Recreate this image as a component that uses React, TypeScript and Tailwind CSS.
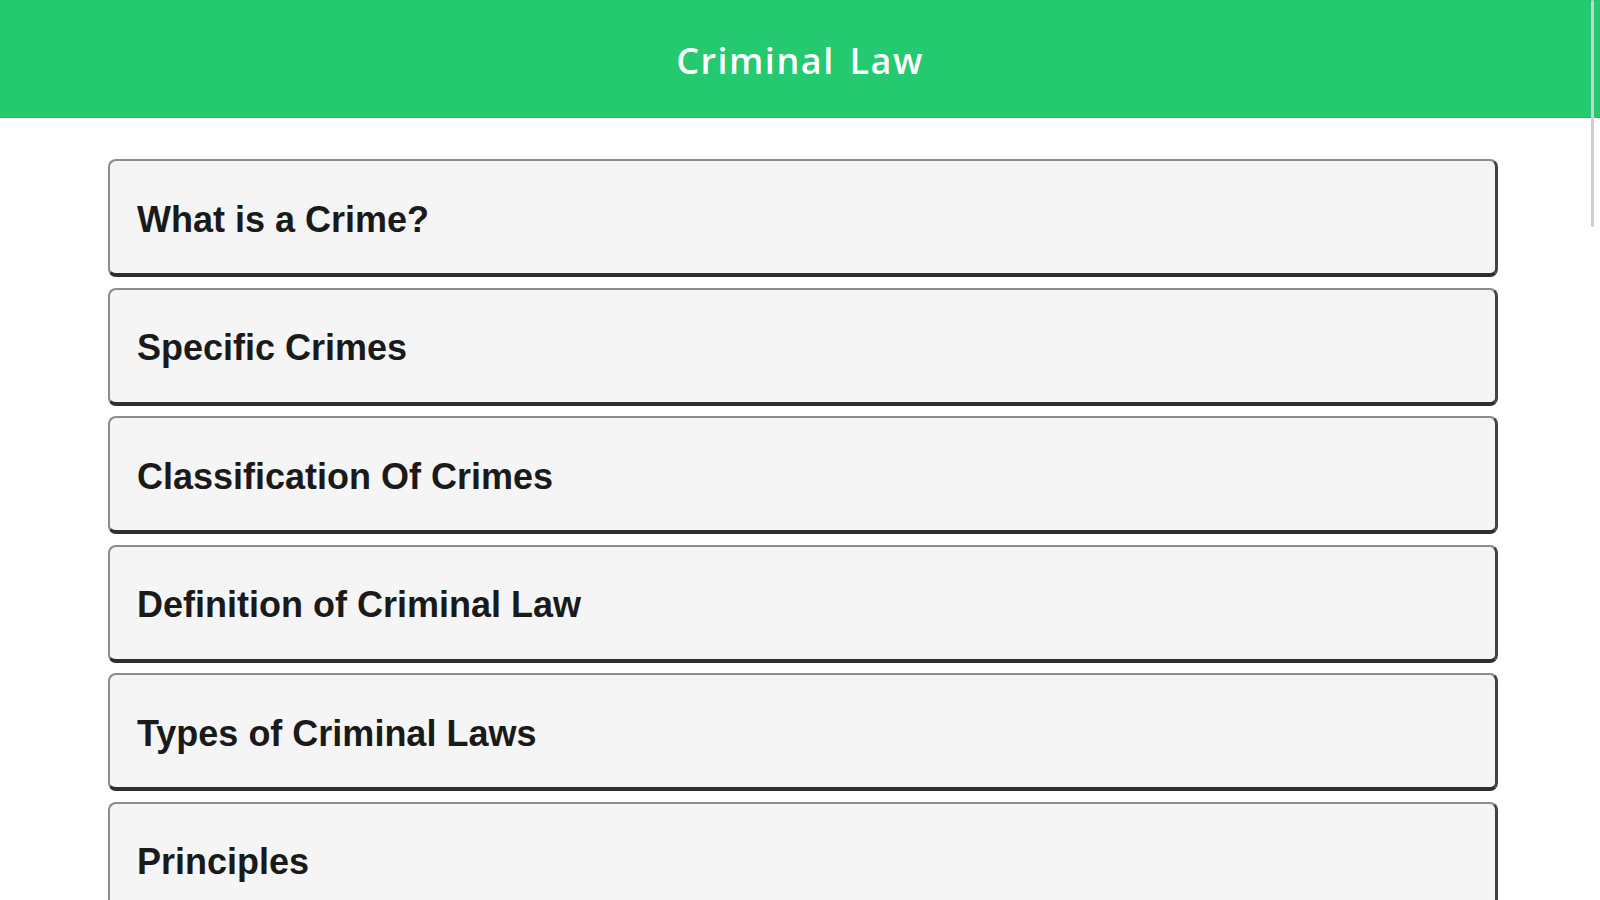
import { FC } from "react";

const topics: string[] = [
  "What is a Crime?",
  "Specific Crimes",
  "Classification Of Crimes",
  "Definition of Criminal Law",
  "Types of Criminal Laws",
  "Principles",
  "Elements of a Crime",
];

const TopicCard: FC<{ title: string }> = ({ title }) => (
  <button
    className="flex items-center shrink-0 h-[118px] w-full pl-[27px] pt-[5px] text-left rounded-[8px] bg-[#f5f5f5]
               border-t-2 border-l-2 border-r-[3px] border-b-4
               border-t-[#8c8c8c] border-l-[#8c8c8c] border-r-[#444] border-b-[#2e2e2e]"
  >
    <span className="text-[36px] font-bold text-[#1a1a1a] font-['Liberation_Sans',Arial,sans-serif]">
      {title}
    </span>
  </button>
);

export default function App() {
  return (
    <div className="relative h-[900px] w-full overflow-hidden bg-white">
      {/* --- Header --- */}
      <header className="flex items-center justify-center h-[118px] pt-[5px] bg-[#25c96f] border-b border-[#20bf66]">
        <h1 className="text-[36px] font-semibold text-white tracking-[1.5px] [word-spacing:4px] font-['Open_Sans',sans-serif]">
          Criminal Law
        </h1>
      </header>

      <main className="flex flex-col gap-[10.5px] pt-[41px] pl-[108px] pr-[102px]">
        {topics.map((t) => (
          <TopicCard key={t} title={t} />
        ))}
      </main>

      {/* overlay scrollbar */}
      <div className="absolute top-0 right-[6px] w-[3px] h-[227px] rounded-full bg-[#cfcfcf]" />
    </div>
  );
}
